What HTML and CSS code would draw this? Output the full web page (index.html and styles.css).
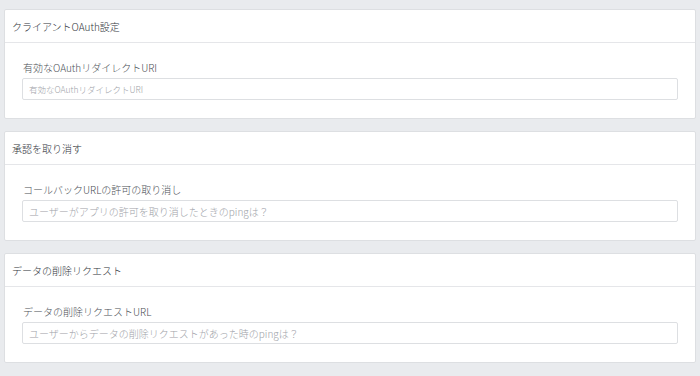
FILE: index.html
```html
<!DOCTYPE html>
<html lang="ja">
<head>
<meta charset="utf-8">
<link rel="stylesheet" href="styles.css">
</head>
<body>
<main class="page">
  <section class="card">
    <header class="card-header">クライアントOAuth設定</header>
    <div class="card-body">
      <label class="field-label">有効なOAuthリダイレクトURI</label>
      <input class="field-input small" type="text" placeholder="有効なOAuthリダイレクトURI">
    </div>
  </section>
  <section class="card">
    <header class="card-header">承認を取り消す</header>
    <div class="card-body">
      <label class="field-label">コールバックURLの許可の取り消し</label>
      <input class="field-input" type="text" placeholder="ユーザーがアプリの許可を取り消したときのpingは？">
    </div>
  </section>
  <section class="card">
    <header class="card-header">データの削除リクエスト</header>
    <div class="card-body">
      <label class="field-label">データの削除リクエストURL</label>
      <input class="field-input" type="text" placeholder="ユーザーからデータの削除リクエストがあった時のpingは？">
    </div>
  </section>
</main>
</body>
</html>
```
FILE: styles.css
```css
html, body {
  margin: 0;
  padding: 0;
}
body {
  background: #e9ebee;
  font-family: "Noto Sans CJK JP", "Noto Sans", sans-serif;
  color: #4b4f56;
}
.page {
  display: flex;
  flex-direction: column;
  gap: 12px;
  padding: 9px 4px 0 4px;
}
.card {
  background: #ffffff;
  border: 1px solid #dddfe2;
  border-radius: 2px;
}
.card-header {
  height: 32px;
  display: flex;
  align-items: center;
  padding: 0 7px;
  border-bottom: 1px solid #e5e6e9;
  font-size: 10px;
  font-weight: 300;
  color: #30343a;
}
.card-body {
  display: flex;
  flex-direction: column;
  padding: 17px 17px 18px 17px;
}
.field-label {
  font-size: 10px;
  font-weight: 300;
  line-height: 15px;
  color: #4b4f56;
  margin-bottom: 3px;
  padding-left: 1px;
}
.field-input {
  box-sizing: border-box;
  height: 22px;
  width: 100%;
  margin: 0;
  border: 1px solid #dddfe2;
  border-radius: 2px;
  padding: 0 6px;
  font-family: "Noto Sans CJK JP", "Noto Sans", sans-serif;
  font-size: 10px;
  font-weight: 300;
  color: #1d2129;
  background: #fff;
  outline: none;
}
.field-input::placeholder {
  color: #9ea2a8;
}
.field-input.small {
  font-size: 8.5px;
}
```
